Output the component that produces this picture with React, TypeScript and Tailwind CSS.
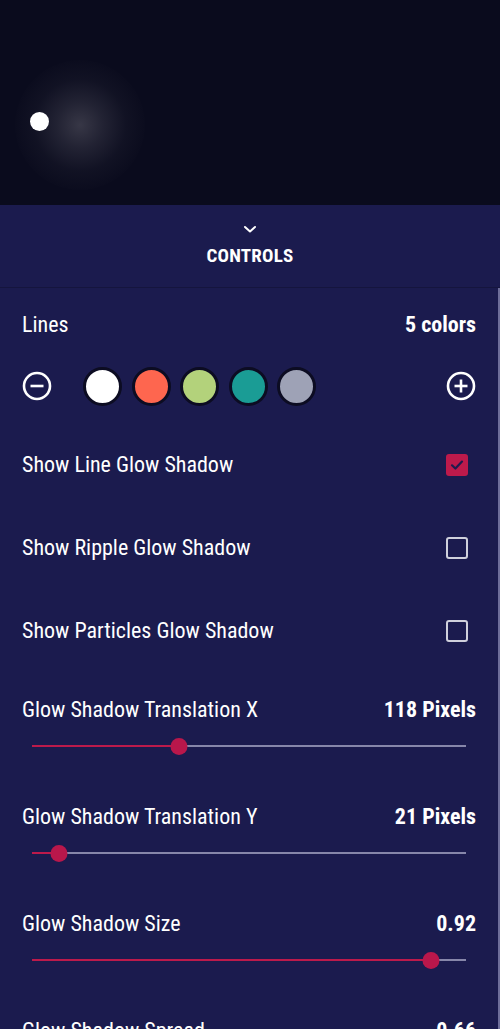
import React from "react";

const font = { fontFamily: "'Roboto Condensed', Roboto, 'Noto Sans', sans-serif" };

function CircleIcon({ plus }: { plus?: boolean }) {
  return (
    <svg width="30" height="30" viewBox="0 0 30 30" fill="none">
      <circle cx="15" cy="15" r="13" stroke="white" strokeWidth="2.6" />
      <line x1="8.5" y1="15" x2="21.5" y2="15" stroke="white" strokeWidth="2.6" />
      {plus && <line x1="15" y1="8.5" x2="15" y2="21.5" stroke="white" strokeWidth="2.6" />}
    </svg>
  );
}

function CheckRow({ label, checked }: { label: string; checked?: boolean }) {
  return (
    <div className="flex h-[83px] items-center justify-between">
      <span className="text-[22px] leading-[24px] text-white">{label}</span>
      <div className="mr-[8px] flex h-[22px] w-[22px] items-center justify-center">
        {checked ? (
          <div className="flex h-[22px] w-[22px] items-center justify-center rounded-[3px] bg-[#bd1a4b]">
            <svg width="16" height="16" viewBox="0 0 16 16" fill="none">
              <path d="M3 8.3 L6.4 11.5 L13 4.6" stroke="#1d1b4f" strokeWidth="2.2" strokeLinecap="round" strokeLinejoin="round" />
            </svg>
          </div>
        ) : (
          <div className="h-[22px] w-[22px] rounded-[3px] border-2 border-[#cfd0dc]" />
        )}
      </div>
    </div>
  );
}

function SliderRow({ label, value, frac }: { label: string; value: string; frac: number }) {
  return (
    <div className="pt-[24px] pb-[27px]">
      <div className="flex h-[24px] items-center justify-between">
        <span className="text-[22px] leading-[24px] text-white">{label}</span>
        <span className="text-[22px] font-bold leading-[24px] text-white">{value}</span>
      </div>
      <div className="relative mx-[10px] mt-[16px] h-[16px]">
        <div className="absolute left-0 right-0 top-[7px] h-[2px] bg-[#8787aa]" />
        <div className="absolute left-0 top-[7px] h-[2px] bg-[#bd1a4b]" style={{ width: `${frac * 100}%` }} />
        <div
          className="absolute top-0 h-[17px] w-[17px] -translate-x-1/2 rounded-full bg-[#b9174b]"
          style={{ left: `${frac * 100}%` }}
        />
      </div>
    </div>
  );
}

export default function App() {
  const swatches = ["#ffffff", "#fe664f", "#b3d27b", "#1a9c95", "#9ea2b6"];
  return (
    <div className="h-[1029px] w-[500px] overflow-hidden bg-[#1b1b4e]" style={font}>
      {/* canvas */}
      <div className="relative h-[205px] overflow-hidden bg-[#0a0b1d]">
        <div
          className="absolute h-[130px] w-[130px] rounded-full"
          style={{
            left: 15,
            top: 60,
            background:
              "radial-gradient(circle, rgba(110,108,120,0.45) 0%, rgba(85,84,98,0.32) 25%, rgba(55,55,70,0.16) 50%, rgba(25,25,40,0.05) 72%, rgba(10,11,29,0) 85%)",
          }}
        />
        <div className="absolute left-[30px] top-[112px] h-[19px] w-[19px] rounded-full bg-white" />
      </div>

      {/* header */}
      <div className="flex h-[83px] flex-col items-center border-b border-[#15153e] bg-[#1b1b4e]">
        <svg className="mt-[19px]" width="14" height="10" viewBox="0 0 14 10" fill="none">
          <path d="M2 3 L7 7.5 L12 3" stroke="white" strokeWidth="2" strokeLinecap="round" strokeLinejoin="round" />
        </svg>
        <span className="mt-[12px] text-[19px] font-bold leading-[20px] tracking-[0.2px] text-white">CONTROLS</span>
      </div>

      {/* content */}
      <div className="border-r-2 border-[#6e6e9a] pl-[22px] pr-[22px]">
        <div className="flex h-[73px] items-center justify-between">
          <span className="text-[22px] leading-[24px] text-white">Lines</span>
          <span className="text-[22px] font-bold leading-[24px] text-white">5 colors</span>
        </div>
        <div className="flex h-[50px] items-center justify-between">
          <div className="flex items-center">
            <CircleIcon />
            <div className="ml-[31px] flex items-center gap-[9.5px]">
              {swatches.map((c) => (
                <div
                  key={c}
                  className="h-[39px] w-[39px] rounded-full border-[3px] border-[#0c0c22]"
                  style={{ backgroundColor: c }}
                />
              ))}
            </div>
          </div>
          <CircleIcon plus />
        </div>
        <div className="mt-[12px]">
          <CheckRow label="Show Line Glow Shadow" checked />
          <CheckRow label="Show Ripple Glow Shadow" />
          <CheckRow label="Show Particles Glow Shadow" />
        </div>
        <div className="pt-[2px]">
          <SliderRow label="Glow Shadow Translation X" value="118 Pixels" frac={0.339} />
          <SliderRow label="Glow Shadow Translation Y" value="21 Pixels" frac={0.062} />
          <SliderRow label="Glow Shadow Size" value="0.92" frac={0.92} />
          <SliderRow label="Glow Shadow Spread" value="0.66" frac={0.66} />
        </div>
      </div>
    </div>
  );
}
